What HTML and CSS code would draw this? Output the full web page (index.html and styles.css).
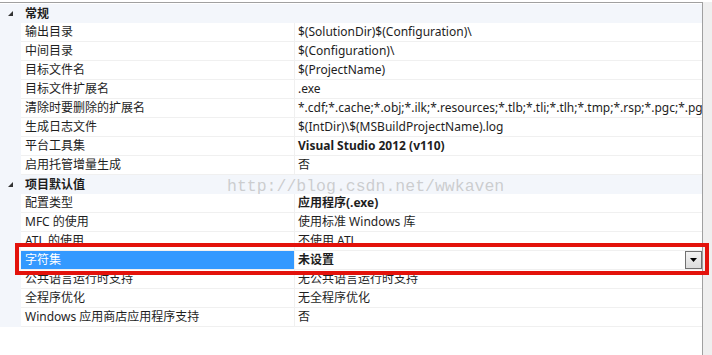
FILE: index.html
```html
<!DOCTYPE html>
<html lang="zh-CN">
<head>
    <meta charset="UTF-8">
    <title>属性页</title>
    <link rel="stylesheet" href="styles.css">
</head>
<body>
    <div class="frame">
        <div class="props">
            <div class="cat">
                <span class="toggle"><svg width="5" height="5" viewBox="0 0 5 5"><polygon points="5,0 5,5 0,5" fill="#333"/></svg></span>
                <span class="cat-name">常规</span>
            </div>
            <div class="row"><div class="gutter"></div><div class="name">输出目录</div><div class="value">$(SolutionDir)$(Configuration)\</div></div>
            <div class="row"><div class="gutter"></div><div class="name">中间目录</div><div class="value">$(Configuration)\</div></div>
            <div class="row"><div class="gutter"></div><div class="name">目标文件名</div><div class="value">$(ProjectName)</div></div>
            <div class="row"><div class="gutter"></div><div class="name">目标文件扩展名</div><div class="value">.exe</div></div>
            <div class="row"><div class="gutter"></div><div class="name">清除时要删除的扩展名</div><div class="value">*.cdf;*.cache;*.obj;*.ilk;*.resources;*.tlb;*.tli;*.tlh;*.tmp;*.rsp;*.pgc;*.pgd;*.meta;$(TargetPath)</div></div>
            <div class="row"><div class="gutter"></div><div class="name">生成日志文件</div><div class="value">$(IntDir)\$(MSBuildProjectName).log</div></div>
            <div class="row"><div class="gutter"></div><div class="name">平台工具集</div><div class="value bold">Visual Studio 2012 (v110)</div></div>
            <div class="row"><div class="gutter"></div><div class="name">启用托管增量生成</div><div class="value">否</div></div>

            <div class="cat">
                <span class="toggle"><svg width="5" height="5" viewBox="0 0 5 5"><polygon points="5,0 5,5 0,5" fill="#333"/></svg></span>
                <span class="cat-name">项目默认值</span>
            </div>
            <div class="row"><div class="gutter"></div><div class="name">配置类型</div><div class="value bold">应用程序(.exe)</div></div>
            <div class="row"><div class="gutter"></div><div class="name">MFC 的使用</div><div class="value">使用标准 Windows 库</div></div>
            <div class="row"><div class="gutter"></div><div class="name">ATL 的使用</div><div class="value">不使用 ATL</div></div>
            <div class="row selected">
                <div class="gutter"></div>
                <div class="name">字符集</div>
                <div class="value bold">
                    <span>未设置</span>
                    <span class="drop"><svg width="7" height="4" viewBox="0 0 7 4"><polygon points="0,0 7,0 3.5,4" fill="#000"/></svg></span>
                </div>
            </div>
            <div class="row"><div class="gutter"></div><div class="name">公共语言运行时支持</div><div class="value">无公共语言运行时支持</div></div>
            <div class="row"><div class="gutter"></div><div class="name">全程序优化</div><div class="value">无全程序优化</div></div>
            <div class="row"><div class="gutter"></div><div class="name">Windows 应用商店应用程序支持</div><div class="value">否</div></div>

            <!-- watermark and annotation box lie over the grid -->
            <div class="watermark">http://blog.csdn.net/wwkaven</div>
            <div class="mark"></div>
        </div>
        <div class="side"></div>
    </div>
</body>
</html>
```

FILE: styles.css
```css
body {
    margin: 0;
    background: #fff;
    font-family: "Noto Sans", "Noto Sans CJK SC", sans-serif;
    font-size: 12px;
    color: #1e1e1e;
}

.frame {
    display: flex;
    height: 355px;
    padding-top: 2px;
    box-sizing: border-box;
}

/* Property grid */
.props {
    position: relative;
    width: 702px;
    padding-top: 1px;
    border-top: 1px solid #a0a0a0;
    border-right: 1px solid #a0a0a0;
    background: #fff;
}

.side {
    flex: 1;
    background: #efefef;
}

.cat {
    display: flex;
    align-items: center;
    height: 19px;
    background: #f3f6fb;
}

.toggle {
    display: flex;
    width: 25px;
    padding-left: 8px;
    box-sizing: border-box;
}

.cat-name {
    font-weight: 700;
    line-height: 19px;
}

.row {
    display: grid;
    grid-template-columns: 21px 273px 1fr;
    height: 19px;
}

.gutter {
    background: #f3f6fb;
}

.name,
.value {
    line-height: 18px;
    border-bottom: 1px solid #f0f0f0;
    white-space: nowrap;
    overflow: hidden;
}

.name {
    padding-left: 4px;
}

.value {
    padding-left: 3px;
    border-left: 1px solid #f0f0f0;
}

.bold {
    font-weight: 700;
}

.selected .name {
    background: #3399ff;
    color: #fff;
}

.selected .value {
    display: flex;
    justify-content: space-between;
}

.drop {
    display: flex;
    align-items: center;
    justify-content: center;
    width: 17px;
    height: 18px;
    box-sizing: border-box;
    border: 1px solid #707070;
    background: linear-gradient(#f2f2f2, #dcdcdc);
}

.watermark {
    position: absolute;
    left: 227px;
    top: 174px;
    font-family: "Liberation Mono", monospace;
    font-size: 16.5px;
    line-height: 19px;
    color: rgba(170, 170, 170, 0.55);
    pointer-events: none;
}

.mark {
    position: absolute;
    left: 15px;
    top: 240px;
    width: 694px;
    height: 32px;
    box-sizing: border-box;
    border: 4px solid #e3120b;
}
```
